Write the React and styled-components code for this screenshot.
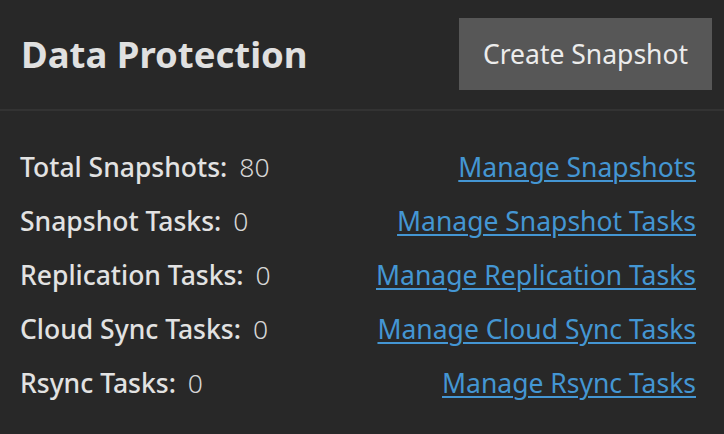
import React from "react";
import styled, { createGlobalStyle } from "styled-components";

const GlobalStyle = createGlobalStyle`
  html, body {
    margin: 0;
    padding: 0;
    background: #282828;
  }
  body {
    font-family: "Noto Sans", "Open Sans", sans-serif;
  }
`;

const Card = styled.div`
  width: 724px;
  height: 434px;
  background: #282828;
  color: #e2e2e2;
`;

const Header = styled.div`
  height: 111px;
  display: flex;
  align-items: center;
  justify-content: space-between;
  padding: 0 12px 2px 21px;
  border-bottom: 2px solid #333333;
  box-sizing: border-box;
`;

const Title = styled.h1`
  margin: 0;
  font-size: 36.5px;
  font-weight: 700;
  color: #e0e0e0;
`;

const Button = styled.button`
  width: 253px;
  height: 72px;
  border: 0;
  background: #575757;
  color: #ececec;
  font-family: inherit;
  font-size: 26.5px;
  font-weight: 400;
  cursor: pointer;
`;

const Body = styled.div`
  padding: 29px 28px 0 20px;
  display: flex;
  flex-direction: column;
`;

const Row = styled.div`
  height: 54px;
  display: flex;
  align-items: center;
  justify-content: space-between;
  font-size: 26.5px;
`;

const Stat = styled.div`
  display: flex;
  align-items: baseline;
  gap: 12px;
`;

const Label = styled.span`
  font-weight: 500;
  color: #e2e2e2;
`;

const Value = styled.span`
  font-weight: 300;
  color: #d6d6d6;
`;

const Link = styled.a`
  color: #4496d3;
  text-decoration: underline;
  text-underline-offset: 3px;
  text-decoration-thickness: 2px;
  cursor: pointer;
`;

const rows = [
  { label: "Total Snapshots:", value: 80, link: "Manage Snapshots" },
  { label: "Snapshot Tasks:", value: 0, link: "Manage Snapshot Tasks" },
  { label: "Replication Tasks:", value: 0, link: "Manage Replication Tasks" },
  { label: "Cloud Sync Tasks:", value: 0, link: "Manage Cloud Sync Tasks" },
  { label: "Rsync Tasks:", value: 0, link: "Manage Rsync Tasks" },
];

export default function App() {
  return (
    <>
      <GlobalStyle />
      <Card>
        <Header>
          <Title>Data Protection</Title>
          <Button>Create Snapshot</Button>
        </Header>
        <Body>
          {rows.map((r) => (
            <Row key={r.label}>
              <Stat>
                <Label>{r.label}</Label>
                <Value>{r.value}</Value>
              </Stat>
              <Link>{r.link}</Link>
            </Row>
          ))}
        </Body>
      </Card>
    </>
  );
}
